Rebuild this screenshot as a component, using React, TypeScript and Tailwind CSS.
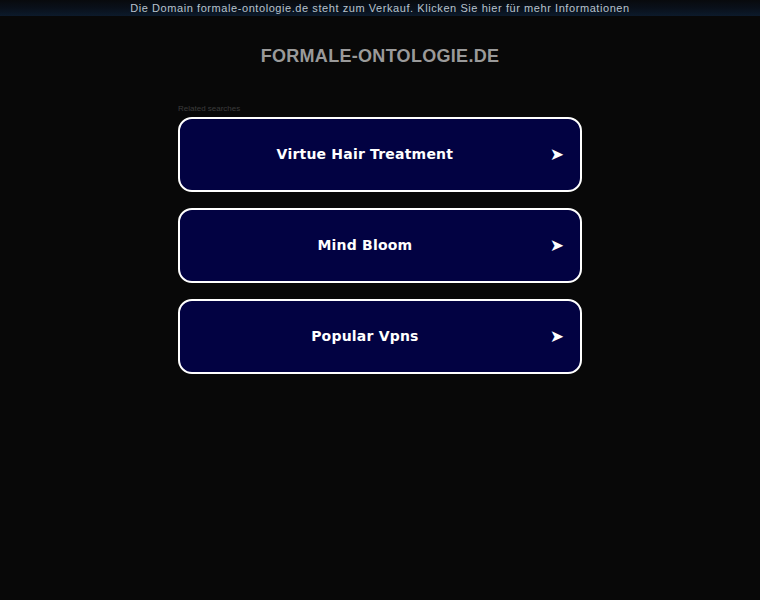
export default function App() {
  const items = ["Virtue Hair Treatment", "Mind Bloom", "Popular Vpns"];

  return (
    <div className="min-h-[600px] bg-[#080808] font-['Liberation_Sans',Arial,sans-serif]">
      <div className="h-[16px] bg-gradient-to-b from-[#080a0d] via-[#09101a] to-[#0c1a2b] text-center text-[11px] leading-[16px] tracking-[0.57px] text-[#b8c2cc]">
        Die Domain formale-ontologie.de steht zum Verkauf. Klicken Sie hier für mehr Informationen
      </div>

      <h1 className="mt-[29px] text-center text-[18px] font-bold leading-[22px] tracking-[0.3px] text-[#9a9a9a]">
        FORMALE-ONTOLOGIE.DE
      </h1>

      <div className="mx-auto mt-[37px] w-[404px]">
        <div className="text-[8px] leading-[10px] text-[#3c3c3c]">Related searches</div>
        <div className="mt-[3px] flex flex-col gap-[16px]">
          {items.map((t) => (
            <a
              key={t}
              href="#"
              className="flex h-[75px] items-center rounded-[14px] border-2 border-white bg-[#020242] pr-[16px]"
            >
              <span className="flex-1 text-center font-['DejaVu_Sans',sans-serif] text-[14px] font-bold tracking-[0.2px] text-white">
                {t}
              </span>
              <span className="font-['DejaVu_Sans',sans-serif] text-[17px] leading-none text-white">➤</span>
            </a>
          ))}
        </div>
      </div>
    </div>
  );
}
